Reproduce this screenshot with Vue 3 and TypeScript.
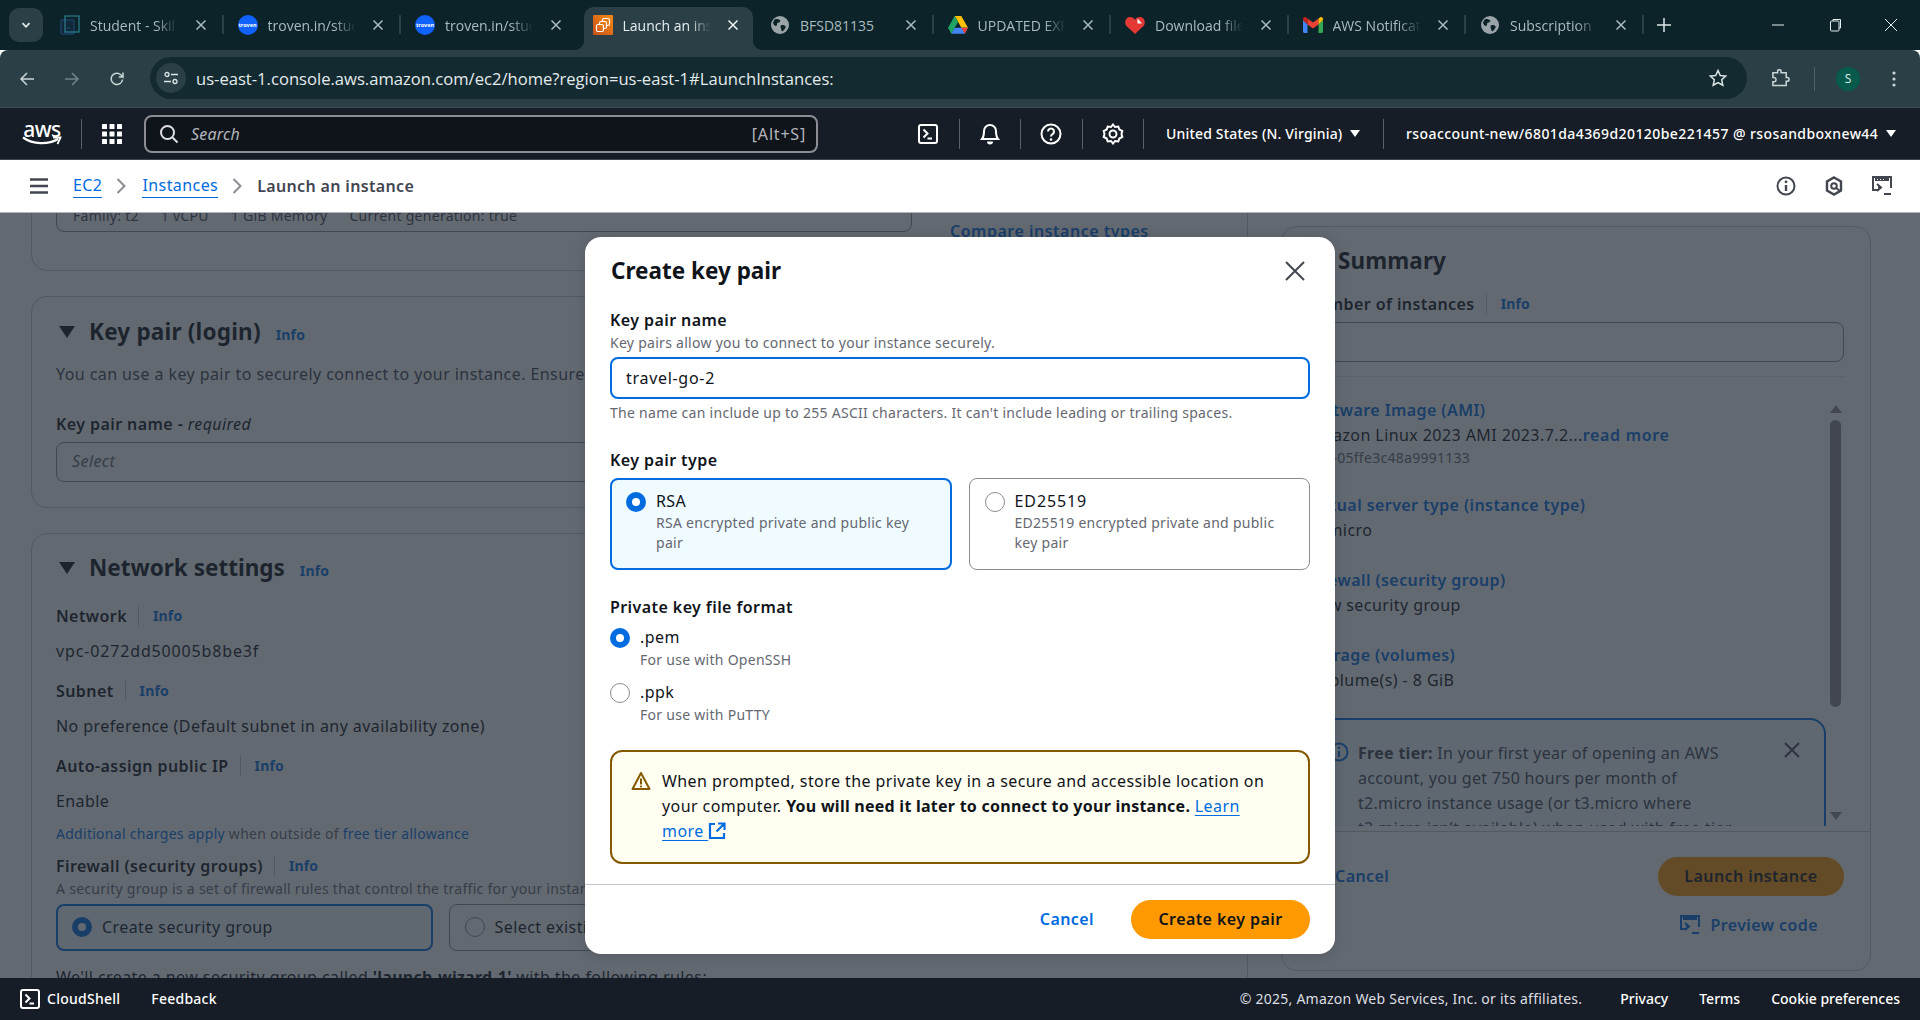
<script setup lang="ts">
interface Tab { title: string; icon: string; active?: boolean; sep?: boolean }
const tabs: Tab[] = [
  { title: 'Student - Skil', icon: 'student', sep: true },
  { title: 'troven.in/stud', icon: 'troven', sep: true },
  { title: 'troven.in/stud', icon: 'troven' },
  { title: 'Launch an ins', icon: 'launch', active: true },
  { title: 'BFSD81135', icon: 'globe', sep: true },
  { title: 'UPDATED EXF', icon: 'drive', sep: true },
  { title: 'Download file', icon: 'heart', sep: true },
  { title: 'AWS Notificat', icon: 'gmail', sep: true },
  { title: 'Subscription', icon: 'globe', sep: true },
]
const summary = [
  { link: 'Software Image (AMI)', value: 'Amazon Linux 2023 AMI 2023.7.2...', more: 'read more', sub: 'ami-05ffe3c48a9991133' },
  { link: 'Virtual server type (instance type)', value: 't2.micro' },
  { link: 'Firewall (security group)', value: 'New security group' },
  { link: 'Storage (volumes)', value: '1 volume(s) - 8 GiB' },
]
const networkRows = [
  { label: 'Network', value: 'vpc-0272dd50005b8be3f', wide: true },
  { label: 'Subnet', value: 'No preference (Default subnet in any availability zone)' },
  { label: 'Auto-assign public IP', value: 'Enable' },
]
</script>

<template>
  <div class="screen">
    <!-- browser tabs -->
    <div class="tabbar">
      <div class="tab-switch">
        <svg width="12" height="12" viewBox="0 0 12 12"><path d="M2.500 4.200 6 7.800l3.500-3.600" fill="none" stroke="#dfe8e9" stroke-width="1.800"/></svg>
      </div>
      <div v-for="(t, i) in tabs" :key="i" class="tab" :class="{ active: t.active, sep: t.sep }">
        <span class="fav">
          <svg v-if="t.icon === 'student'" width="20" height="20" viewBox="0 0 20 20"><rect x="1" y="5" width="13" height="14" rx="1" fill="#10283a" stroke="#1d3f63" stroke-width="1.400"/><rect x="5" y="1" width="14" height="16" fill="none" stroke="#2b7f8f" stroke-width="1.200"/><path d="M7 13h3" stroke="#1d4a6b" stroke-width="1.200"/></svg>
          <span v-else-if="t.icon === 'troven'" class="troven">troven</span>
          <svg v-else-if="t.icon === 'launch'" width="20" height="20" viewBox="0 0 20 20"><defs><linearGradient id="lg" x1="0" y1="1" x2="1" y2="0"><stop offset="0" stop-color="#c8511b"/><stop offset="1" stop-color="#f58a12"/></linearGradient></defs><rect width="20" height="20" rx="1" fill="url(#lg)"/><rect x="9.500" y="3.500" width="7" height="7" rx="1.500" fill="none" stroke="#fff" stroke-width="1.200"/><rect x="6.500" y="6.500" width="7" height="7" rx="1.500" fill="url(#lg)" stroke="#fff" stroke-width="1.200"/><rect x="3.500" y="9.500" width="7" height="7" rx="1.500" fill="url(#lg)" stroke="#fff" stroke-width="1.200"/></svg>
          <svg v-else-if="t.icon === 'globe'" width="18" height="18" viewBox="0 0 18 18"><circle cx="9" cy="9" r="9" fill="#9aa3a7"/><path d="M4 3.200c2.200-.6 3.600.3 5.200 1 .4 1.600-1 2-2.400 2.600C5.500 7.400 6.800 9.600 5 10 3.600 9.800 2.500 8.500 2 7c.3-1.600 1-2.800 2-3.800ZM10.200 9.200c1.800-.8 3.600 0 4.600 1.300-.4 2.200-1.700 3.800-3.600 4.900-1.200-.6-.8-2.200-1.300-3.200-.7-1-.5-2.300.3-3Z" fill="#0c2329"/></svg>
          <svg v-else-if="t.icon === 'drive'" width="20" height="18" viewBox="0 0 20 18"><path d="M6.700 0h6.600l6.700 11.800h-6.600Z" fill="#ffc107"/><path d="M6.700 0 0 11.800l3.300 5.900L10 5.900Z" fill="#1fa463"/><path d="M3.300 17.700h13.400l3.300-5.900H6.600Z" fill="#4285f4"/><path d="M16.700 17.700l3.300-5.900h-6.600Z" fill="#ea4335"/></svg>
          <svg v-else-if="t.icon === 'heart'" width="20" height="18" viewBox="0 0 20 18"><path d="M10 18 1 9.500C-1 6 1 1 5 1c2.300 0 4 1 5 3 1-2 2.700-3 5-3 4 0 6 5 4 8.500Z" fill="#e53935"/><path d="M12.500 2.500 17 7.500h-4.500Z" fill="#fff"/></svg>
          <svg v-else-if="t.icon === 'gmail'" width="20" height="16" viewBox="0 0 20 16"><path d="M0 3v11.500C0 15.300.7 16 1.500 16H4.500V7.500Z" fill="#4285f4"/><path d="M15.500 7.500V16h3c.8 0 1.500-.7 1.500-1.500V3Z" fill="#34a853"/><path d="M4.500 7.500 10 11.500l5.500-4V1.500L10 5.600 4.500 1.500Z" fill="#ea4335"/><path d="M0 3 4.500 7.500v-6L3 .4C1.700-.5 0 .4 0 2Z" fill="#c5221f"/><path d="M15.500 1.500v6L20 3V2c0-1.600-1.700-2.500-3-1.600Z" fill="#fbbc04"/></svg>
        </span>
        <span class="tab-title" :class="{ plain: t.title === 'BFSD81135' }">{{ t.title }}</span>
        <svg class="tab-x" width="12" height="12" viewBox="0 0 12 12"><path d="M1.500 1.500l9 9M10.500 1.500l-9 9" stroke="currentColor" stroke-width="1.500"/></svg>
      </div>
      <svg class="plus" width="14" height="14" viewBox="0 0 14 14"><path d="M7 0v14M0 7h14" stroke="#dfe8e9" stroke-width="1.500"/></svg>
      <div class="win">
        <svg width="14" height="14" viewBox="0 0 14 14"><path d="M1 7h12" stroke="#e6eeee" stroke-width="1"/></svg>
        <svg width="14" height="14" viewBox="0 0 14 14"><rect x="2.500" y="3" width="8.500" height="10" rx="1" fill="none" stroke="#e6eeee"/><path d="M5 3V1.500h7.500V10H11" fill="none" stroke="#e6eeee"/></svg>
        <svg width="14" height="14" viewBox="0 0 14 14"><path d="M1 1l12 12M13 1 1 13" stroke="#e6eeee" stroke-width="1"/></svg>
      </div>
    </div>

    <!-- browser toolbar -->
    <div class="toolbar">
      <div class="nav-btns">
        <svg width="16" height="16" viewBox="0 0 16 16"><path d="M15 8H2M8 2 2 8l6 6" fill="none" stroke="#c9d6d8" stroke-width="1.500"/></svg>
        <svg width="16" height="16" viewBox="0 0 16 16"><path d="M1 8h13M8 2l6 6-6 6" fill="none" stroke="#71838a" stroke-width="1.500"/></svg>
        <svg width="16" height="16" viewBox="0 0 16 16"><path d="M13.500 8.500A5.700 5.700 0 1 1 11.800 3.800L14 6V1.500M14 6H9.800" fill="none" stroke="#c9d6d8" stroke-width="1.500"/></svg>
      </div>
      <div class="urlbar">
        <span class="site-info">
          <svg width="16" height="16" viewBox="0 0 16 16"><circle cx="4" cy="4.500" r="2" fill="none" stroke="#dbe5e6" stroke-width="1.300"/><path d="M8 4.500h7M1 11.500h7" stroke="#dbe5e6" stroke-width="1.300"/><circle cx="12" cy="11.500" r="2" fill="none" stroke="#dbe5e6" stroke-width="1.300"/></svg>
        </span>
        <span class="url">us-east-1.console.aws.amazon.com/ec2/home?region=us-east-1#LaunchInstances:</span>
        <svg class="star" width="20" height="20" viewBox="0 0 20 20"><path d="M10 2.500l2.300 5 5.400.6-4 3.700 1.100 5.400L10 14.500l-4.800 2.700 1.100-5.400-4-3.700 5.400-.6Z" fill="none" stroke="#dbe5e6" stroke-width="1.500"/></svg>
      </div>
      <div class="tool-right">
        <svg width="20" height="20" viewBox="0 0 20 20"><path d="M2 5h5V3.500a1.800 1.800 0 0 1 3.600 0V5H16v5h1a2 2 0 0 1 0 4h-1v4.500H2v-4h1.500a2.300 2.300 0 0 0 0-4.500H2Z" transform="translate(1 -1) scale(.95)" fill="none" stroke="#c9d6d8" stroke-width="1.600"/></svg>
        <span class="tool-sep"></span>
        <span class="avatar">S</span>
        <svg width="4" height="16" viewBox="0 0 4 16"><circle cx="2" cy="2" r="1.600" fill="#c9d6d8"/><circle cx="2" cy="8" r="1.600" fill="#c9d6d8"/><circle cx="2" cy="14" r="1.600" fill="#c9d6d8"/></svg>
      </div>
    </div>

    <!-- AWS top navigation -->
    <header class="awsbar">
      <div class="aws-logo">
        <span>aws</span>
        <svg width="40" height="10" viewBox="0 0 40 10"><path d="M1 1.500C11 8.500 26 9 36 3" fill="none" stroke="#fff" stroke-width="2.200"/><path d="M31 1.500h7.500L35.500 8" fill="none" stroke="#fff" stroke-width="1.800"/></svg>
      </div>
      <span class="vsep first"></span>
      <svg class="grid-ico" width="20" height="20" viewBox="0 0 20 20" fill="#fff">
        <rect x="0" y="0" width="5" height="5" rx=".6"/><rect x="7.500" y="0" width="5" height="5" rx=".6"/><rect x="15" y="0" width="5" height="5" rx=".6"/>
        <rect x="0" y="7.500" width="5" height="5" rx=".6"/><rect x="7.500" y="7.500" width="5" height="5" rx=".6"/><rect x="15" y="7.500" width="5" height="5" rx=".6"/>
        <rect x="0" y="15" width="5" height="5" rx=".6"/><rect x="7.500" y="15" width="5" height="5" rx=".6"/><rect x="15" y="15" width="5" height="5" rx=".6"/>
      </svg>
      <div class="aws-search">
        <svg width="20" height="20" viewBox="0 0 20 20"><circle cx="8.500" cy="8.500" r="6.500" fill="none" stroke="#dedee3" stroke-width="2"/><path d="M13 13l5.500 5.500" stroke="#dedee3" stroke-width="2"/></svg>
        <span class="s-ph">Search</span>
        <span class="s-key">[Alt+S]</span>
      </div>
      <div class="aws-icons">
        <span class="ai cs"><svg width="20" height="20" viewBox="0 0 20 20"><rect x="1" y="1" width="18" height="18" rx="2" fill="none" stroke="#fff" stroke-width="2"/><path d="M5.500 5.500 9.500 9.500l-4 4M9.500 14.500H14" fill="none" stroke="#fff" stroke-width="2"/></svg></span>
        <span class="ai"><svg width="20" height="22" viewBox="0 0 20 22"><path d="M10 2a6 6 0 0 0-6 6c0 4-.7 6.500-2 8h16c-1.300-1.500-2-4-2-8a6 6 0 0 0-6-6Z" fill="none" stroke="#fff" stroke-width="2"/><path d="M7 18.500a3 3 0 0 0 6 0Z" fill="#fff"/></svg></span>
        <span class="ai"><svg width="22" height="22" viewBox="0 0 22 22"><circle cx="11" cy="11" r="9.500" fill="none" stroke="#fff" stroke-width="2"/><path d="M8 8.500a3 3 0 1 1 4.500 2.600c-1 .6-1.500 1.200-1.500 2.400" fill="none" stroke="#fff" stroke-width="2"/><circle cx="11" cy="16.500" r="1.300" fill="#fff"/></svg></span>
        <span class="ai"><svg width="22" height="22" viewBox="0 0 22 22"><path d="M11 1.500l2 2.500 3.300-.5 1 3 3 1.500-.8 3 .8 3-3 1.500-1 3-3.300-.5-2 2.500-2-2.500-3.300.5-1-3-3-1.500.8-3-.8-3 3-1.500 1-3 3.300.5Z" fill="none" stroke="#fff" stroke-width="2"/><circle cx="11" cy="11" r="3.500" fill="none" stroke="#fff" stroke-width="2"/></svg></span>
        <span class="ai region">United States (N. Virginia)<i class="caret"></i></span>
        <span class="ai account">rsoaccount-new/6801da4369d20120be221457 @ rsosandboxnew44<i class="caret"></i></span>
      </div>
    </header>

    <!-- breadcrumbs -->
    <div class="crumbs">
      <svg class="burger" width="18" height="16" viewBox="0 0 18 16"><path d="M0 1.500h18M0 8h18M0 14.500h18" stroke="#424650" stroke-width="2.400"/></svg>
      <a class="cr-link">EC2</a>
      <svg class="chev" width="10" height="16" viewBox="0 0 10 16"><path d="M1.500 1 8.500 8l-7 7" fill="none" stroke="#8c8c94" stroke-width="2"/></svg>
      <a class="cr-link">Instances</a>
      <svg class="chev" width="10" height="16" viewBox="0 0 10 16"><path d="M1.500 1 8.500 8l-7 7" fill="none" stroke="#8c8c94" stroke-width="2"/></svg>
      <span class="cr-cur">Launch an instance</span>
      <div class="cr-icons">
        <svg width="20" height="20" viewBox="0 0 20 20"><circle cx="10" cy="10" r="8.500" fill="none" stroke="#424650" stroke-width="2"/><path d="M10 9v6" stroke="#424650" stroke-width="2.400"/><circle cx="10" cy="5.800" r="1.400" fill="#424650"/></svg>
        <svg width="20" height="20" viewBox="0 0 20 20"><path d="M10 1.500l7 4v9l-7 4-7-4v-9Z" fill="none" stroke="#424650" stroke-width="2.400"/><circle cx="10" cy="10" r="2.800" fill="none" stroke="#424650" stroke-width="2"/><path d="M12 12l4 3" stroke="#424650" stroke-width="2"/></svg>
        <svg width="20" height="20" viewBox="0 0 20 20"><path d="M6 14H1V1h18v11" fill="none" stroke="#424650" stroke-width="2"/><path d="M3 5h14V2H3Z" fill="#424650"/><path d="M5 3.500h1M8 3.500h1M11 3.500h1" stroke="#fff"/><path d="M5 8l4 3.500L5 15M9 11.500H6" fill="none" stroke="#424650" stroke-width="2"/><path d="M12 18h7" stroke="#424650" stroke-width="2"/></svg>
      </div>
    </div>

    <!-- page content behind the dialog -->
    <main class="content">
      <div class="columns">
        <div class="left">
          <section class="card card-type">
            <div class="type-box">
              <span>Family: t2</span><span>1 vCPU</span><span>1 GiB Memory</span><span>Current generation: true</span>
            </div>
            <a class="compare">Compare instance types</a>
          </section>

          <section class="card card-key">
            <h2 class="sec-head"><i class="tri"></i>Key pair (login)<a class="info big">Info</a></h2>
            <p class="body key-text">You can use a key pair to securely connect to your instance. Ensure that you have access to the selected key pair before you launch the instance.</p>
            <div class="lbl key-lbl">Key pair name - <em>required</em></div>
            <div class="select">Select</div>
          </section>

          <section class="card card-net">
            <h2 class="sec-head"><i class="tri"></i>Network settings<a class="info big">Info</a></h2>
            <template v-for="r in networkRows" :key="r.label">
              <div class="lbl-row"><span class="lbl">{{ r.label }}</span><span class="lsep"></span><a class="info">Info</a></div>
              <div class="body val" :class="{ wide: r.wide }">{{ r.value }}</div>
            </template>
            <div class="small charges"><a>Additional charges apply</a> when outside of <a>free tier allowance</a></div>
            <div class="lbl-row fw"><span class="lbl">Firewall (security groups)</span><span class="lsep"></span><a class="info">Info</a></div>
            <div class="small fw-desc">A security group is a set of firewall rules that control the traffic for your instance.</div>
            <div class="fw-tiles">
              <div class="fw-tile on"><i class="radio on"></i>Create security group</div>
              <div class="fw-tile"><i class="radio"></i>Select existing security group</div>
            </div>
            <p class="body wizard">We'll create a new security group called <b>'launch-wizard-1'</b> with the following rules:</p>
          </section>
        </div>

        <aside class="panel">
          <div class="panel-top">
            <h2 class="sum-title">Summary</h2>
            <div class="lbl-row"><span class="lbl">Number of instances</span><span class="lsep"></span><a class="info">Info</a></div>
            <div class="num-input"></div>
          </div>
          <div class="panel-scroll">
            <div v-for="s in summary" :key="s.link" class="sum-item">
              <a class="sum-link">{{ s.link }}</a>
              <div class="body">{{ s.value }}<a v-if="s.more" class="sum-more">{{ s.more }}</a></div>
              <div v-if="s.sub" class="small sub">{{ s.sub }}</div>
            </div>
            <div class="free">
              <svg class="free-i" width="20" height="20" viewBox="0 0 20 20"><circle cx="10" cy="10" r="8.500" fill="none" stroke="#006ce0" stroke-width="2"/><path d="M10 9v6" stroke="#006ce0" stroke-width="2.200"/><circle cx="10" cy="5.800" r="1.300" fill="#006ce0"/></svg>
              <p class="free-text"><b>Free tier:</b> In your first year of opening an AWS account, you get 750 hours per month of t2.micro instance usage (or t3.micro where t2.micro isn't available) when used with free tier AMIs.</p>
              <svg class="free-x" width="16" height="16" viewBox="0 0 16 16"><path d="M1 1l14 14M15 1 1 15" stroke="#424650" stroke-width="2"/></svg>
            </div>
            <div class="sb-up"></div>
            <div class="sb-thumb"></div>
            <div class="sb-down"></div>
          </div>
          <div class="panel-foot">
            <div class="foot-row"><a class="pf-cancel">Cancel</a><span class="launch">Launch instance</span></div>
            <a class="preview">
              <svg width="20" height="20" viewBox="0 0 20 20"><path d="M6 14H1V1h18v11" fill="none" stroke="#006ce0" stroke-width="2"/><path d="M3 5h14V2H3Z" fill="#006ce0"/><path d="M5 8l4 3.500L5 15M9 11.500H6" fill="none" stroke="#006ce0" stroke-width="2"/><path d="M12 18h7" stroke="#006ce0" stroke-width="2"/></svg>
              Preview code
            </a>
          </div>
        </aside>
      </div>

      <!-- dialog -->
      <div class="overlay">
        <div class="modal">
          <div class="m-head">
            <h1>Create key pair</h1>
            <svg width="22" height="22" viewBox="0 0 22 22"><path d="M2 2l18 18M20 2 2 20" stroke="#424650" stroke-width="2"/></svg>
          </div>
          <div class="m-body">
            <div class="lbl m-name">Key pair name</div>
            <div class="small m-desc">Key pairs allow you to connect to your instance securely.</div>
            <div class="m-input">travel-go-2</div>
            <div class="small m-hint">The name can include up to 255 ASCII characters. It can't include leading or trailing spaces.</div>

            <div class="lbl m-type">Key pair type</div>
            <div class="m-tiles">
              <div class="m-tile on">
                <i class="radio on"></i>
                <div><div class="body">RSA</div><div class="small grey">RSA encrypted private and public key pair</div></div>
              </div>
              <div class="m-tile">
                <i class="radio"></i>
                <div><div class="body">ED25519</div><div class="small grey">ED25519 encrypted private and public key pair</div></div>
              </div>
            </div>

            <div class="lbl m-format">Private key file format</div>
            <div class="m-radio first">
              <i class="radio on"></i>
              <div><div class="body">.pem</div><div class="small grey">For use with OpenSSH</div></div>
            </div>
            <div class="m-radio">
              <i class="radio"></i>
              <div><div class="body">.ppk</div><div class="small grey">For use with PuTTY</div></div>
            </div>

            <div class="alert">
              <svg class="alert-i" width="20" height="20" viewBox="0 0 20 20"><path d="M10 2 1.500 18h17Z" fill="none" stroke="#855900" stroke-width="2" stroke-linejoin="round"/><path d="M10 7.500v6" stroke="#855900" stroke-width="2"/><circle cx="10" cy="15.500" r="1.100" fill="#855900"/></svg>
              <p>When prompted, store the private key in a secure and accessible location on your computer. <b>You will need it later to connect to your instance.</b> <a class="ext">Learn more <svg width="18" height="18" viewBox="0 0 18 18"><path d="M7 2H2v14h14v-5" fill="none" stroke="#006ce0" stroke-width="2.200"/><path d="M10 1.500h6.500V8M16 2 8.500 9.500" fill="none" stroke="#006ce0" stroke-width="2.200"/></svg></a></p>
            </div>
          </div>
          <div class="m-foot">
            <a class="m-cancel">Cancel</a>
            <span class="m-create">Create key pair</span>
          </div>
        </div>
      </div>
    </main>

    <!-- console footer -->
    <footer class="foot">
      <svg width="20" height="20" viewBox="0 0 20 20"><rect x="1" y="1" width="18" height="18" rx="2" fill="none" stroke="#fff" stroke-width="2"/><path d="M5.500 5.500 9.500 9.500l-4 4M9.500 14.500H14" fill="none" stroke="#fff" stroke-width="2"/></svg>
      <span class="f-cs">CloudShell</span>
      <span class="f-fb">Feedback</span>
      <span class="f-copy">© 2025, Amazon Web Services, Inc. or its affiliates.</span>
      <span class="f-link first">Privacy</span>
      <span class="f-link">Terms</span>
      <span class="f-link">Cookie preferences</span>
    </footer>
  </div>
</template>

<style>
html, body { margin: 0; background: #fff; overflow: hidden; }
</style>

<style scoped>
.screen { width: 1920px; height: 1020px; display: flex; flex-direction: column; overflow: hidden; font-family: "Noto Sans", sans-serif; color: #0f141a; font-size: 16px; line-height: 24px; letter-spacing: .42px; }
a { color: #006ce0; text-decoration: none; }
h1, h2, p { margin: 0; }
i { font-style: normal; }

/* tabs */
.tabbar { height: 50px; flex: none; background: #0c2329; display: flex; align-items: flex-end; font-family: "Open Sans", sans-serif; letter-spacing: 0; padding-left: 9px; box-sizing: border-box; }
.tab-switch { align-self: flex-start; margin: 8px 8px 0 0; width: 34px; height: 34px; flex: none; border-radius: 10px; background: #2a4046; display: flex; align-items: center; justify-content: center; }
.tab { width: 177.500px; height: 43px; flex: none; display: flex; align-items: flex-start; box-sizing: border-box; padding: 8px 0 0 9px; color: #a9bcbf; position: relative; }
.tab.active { width: 169px; margin-right: 8.500px; background: #2a4046; border-radius: 10px 10px 0 0; color: #e8eeef; }
.tab.active::before, .tab.active::after { content: ""; position: absolute; bottom: 0; width: 10px; height: 10px; }
.tab.active::before { left: -10px; background: radial-gradient(circle at 0 0, transparent 10px, #2a4046 10.500px); }
.tab.active::after { right: -10px; background: radial-gradient(circle at 100% 0, transparent 10px, #2a4046 10.500px); }
.tab.sep::after { content: ""; position: absolute; right: 5px; top: 8px; width: 2px; height: 19px; background: #2a4046; }
.fav { width: 20px; height: 20px; display: flex; align-items: center; justify-content: center; flex: none; }
.tab-title { margin: 1px 0 0 10px; width: 88px; font-size: 14px; line-height: 20px; white-space: nowrap; overflow: hidden; -webkit-mask-image: linear-gradient(to right, #000 75%, transparent); mask-image: linear-gradient(to right, #000 75%, transparent); }
.tab-title.plain { -webkit-mask-image: none; mask-image: none; }
.tab-x { position: absolute; right: 22px; top: 12px; }
.tab.active .tab-x { color: #f2f6f6; right: 14px; }
.troven { width: 20px; height: 20px; border-radius: 50%; background: #0f62fe; color: #fff; font: 700 5.500px/20px "Noto Sans", sans-serif; text-align: center; display: block; overflow: hidden; }
.plus { align-self: flex-start; margin: 18px 0 0 8px; flex: none; }
.win { align-self: flex-start; margin: 18px 22px 0 auto; width: 127px; flex: none; display: flex; justify-content: space-between; }

/* toolbar */
.toolbar { height: 58px; flex: none; box-sizing: border-box; background: #2a4046; border-radius: 8px 8px 0 0; border-bottom: 1px solid #3f4d50; display: flex; align-items: center; padding-left: 19px; letter-spacing: 0; }
.nav-btns { display: flex; gap: 29px; width: 131px; flex: none; }
.urlbar { width: 1597px; height: 42px; flex: none; border-radius: 21px; background: #132a30; display: flex; align-items: center; margin-top: -1px; padding-left: 6px; box-sizing: border-box; }
.site-info { width: 30px; height: 30px; border-radius: 50%; background: #2a4046; display: flex; align-items: center; justify-content: center; flex: none; }
.url { margin: 2px 0 0 10px; font: 16.600px/20px "Open Sans", sans-serif; color: #e3ebec; flex: 1; white-space: nowrap; }
.star { margin-right: 19px; }
.tool-right { display: flex; align-items: center; margin-left: 23px; }
.tool-sep { width: 1px; height: 24px; background: #4d6064; margin-left: 24px; }
.avatar { width: 24px; height: 24px; border-radius: 50%; background: #075a4c; color: #dfeeea; font: 12px/24px "Open Sans", sans-serif; text-align: center; margin: 0 32px 0 21px; }

/* aws bar */
.awsbar { height: 52px; flex: none; box-sizing: border-box; background: #161d26; border-bottom: 1px solid #3f4650; display: flex; align-items: center; color: #fff; font-size: 14px; line-height: 20px; letter-spacing: 0; }
.aws-logo { width: 40px; margin-left: 22px; display: flex; flex-direction: column; align-items: center; height: 26px; flex: none; }
.aws-logo span { font: 500 21px/16px "Noto Sans", sans-serif; letter-spacing: -.5px; height: 15px; }
.vsep.first { width: 1px; height: 30px; background: #5a6069; margin-left: 19px; flex: none; }
.grid-ico { margin-left: 20px; flex: none; }
.aws-search { margin-left: 22px; width: 674px; flex: none; height: 38px; box-sizing: border-box; border: 2px solid #8c8c94; border-radius: 8px; background: #0f141a; display: flex; align-items: center; padding-left: 13px; padding-right: 10px; }
.s-ph { margin-left: 12px; font-style: italic; font-size: 16px; color: #b4b4bb; flex: 1; letter-spacing: .2px; }
.s-key { font-size: 16px; color: #b4b4bb; letter-spacing: .8px; }
.aws-icons { display: flex; align-items: center; height: 30px; margin-left: 79px; flex: none; }
.ai { display: flex; align-items: center; justify-content: center; height: 30px; box-sizing: border-box; white-space: nowrap; width: 61.500px; flex: none; border-left: 1px solid #5a6069; }
.ai.cs { border-left: 0; }
.ai.region { width: 240px; font-weight: 500; justify-content: flex-start; padding-left: 22px; letter-spacing: .17px; }
.ai.account { width: 530px; font-weight: 500; justify-content: flex-start; padding-left: 22px; letter-spacing: .42px; }
.caret { display: inline-block; margin-left: 8px; border-left: 5px solid transparent; border-right: 5px solid transparent; border-top: 7px solid #fff; }

/* crumbs */
.crumbs { height: 53px; flex: none; box-sizing: border-box; background: #fff; border-bottom: 1px solid #b4b4bb; display: flex; align-items: center; padding-left: 30px; }
.burger { margin-right: 25px; }
.cr-link { color: #006ce0; border-bottom: 1px solid #006ce0; line-height: 23px; }
.chev { margin: 0 16px 0 14px; }
.cr-cur { font-weight: 600; color: #424650; letter-spacing: .35px; margin-left: -1px; }
.cr-icons { margin-left: auto; display: flex; gap: 28px; padding-right: 28px; }

/* page */
.content { flex: 1; min-height: 0; position: relative; overflow: hidden; background: #fff; }
.columns { display: grid; grid-template-columns: 1217px 590px; column-gap: 33px; padding-left: 31px; align-items: start; }
.left { margin-top: -60px; display: flex; flex-direction: column; gap: 25px; }
.card { border: 1px solid #c6c6cd; border-radius: 16px; box-sizing: border-box; padding: 0 24px; }
.card-type { height: 118px; display: flex; align-items: flex-end; padding-bottom: 38px; }
.type-box { width: 856px; flex: none; box-sizing: border-box; border: 1px solid #8c8c94; border-radius: 8px; height: 60px; padding: 0 16px 5px; font-size: 14px; line-height: 20px; display: flex; align-items: flex-end; gap: 22px; color: #424650; letter-spacing: .28px; }
.compare { margin-left: 38px; font-weight: 600; font-size: 16px; line-height: 20px; margin-bottom: -9px; white-space: nowrap; letter-spacing: .5px; }
.card-key { height: 212px; padding-top: 20px; }
.sec-head { font-size: 22.500px; line-height: 30px; font-weight: 700; display: flex; align-items: center; letter-spacing: 0; }
.card-key .sec-head { letter-spacing: .2px; }
.tri { width: 0; height: 0; border-left: 8.500px solid transparent; border-right: 8.500px solid transparent; border-top: 12px solid currentColor; margin: 0 14px 0 3px; }
.info { font-size: 14px; line-height: 20px; font-weight: 700; letter-spacing: .15px; }
.info.big { margin-left: 15px; margin-top: 6px; }
.key-text { margin-top: 15px; color: #424650; white-space: nowrap; }
.lbl { font-weight: 600; }
.key-lbl { margin-top: 26px; }
.key-lbl em { font-weight: 400; font-style: italic; }
.select { margin-top: 6px; height: 40px; box-sizing: border-box; border: 1px solid #8c8c94; border-radius: 8px; padding: 0 15px; line-height: 37px; font-style: italic; color: #656871; }
.card-net { height: 520px; padding-top: 19px; }
.lbl-row { display: flex; align-items: center; height: 24px; }
.lsep { width: 1px; height: 20px; background: #c6c6cd; margin: 0 14px 0 11px; }
.card-net .lbl-row { margin-top: 16px; }
.card-net .sec-head + .lbl-row { margin-top: 21px; }
.val { margin-top: 11px; }
.val.wide { letter-spacing: .85px; }
.small { font-size: 14px; line-height: 20px; letter-spacing: .28px; }
.charges { margin-top: 11px; color: #656871; }
.card-net .lbl-row.fw { margin-top: 10px; }
.fw-desc { margin-top: 1px; color: #656871; white-space: nowrap; }
.fw-tiles { margin-top: 5px; display: flex; gap: 16px; }
.fw-tile { width: 376.500px; flex: none; height: 47px; box-sizing: border-box; border: 1px solid #8c8c94; border-radius: 8px; display: flex; align-items: center; padding: 0 0 1px 15px; gap: 10px; white-space: nowrap; }
.fw-tile.on { border: 2px solid #006ce0; background: #f0fbff; padding-left: 14px; }
.wizard { margin-top: 14px; white-space: nowrap; }
.wizard b { letter-spacing: .25px; }

.radio { width: 20px; height: 20px; flex: none; box-sizing: border-box; border-radius: 50%; border: 1.500px solid #8c8c94; background: #fff; display: block; }
.radio.on { border: 6.500px solid #006ce0; }

.panel { margin-top: 13px; height: 745px; box-sizing: border-box; border: 1px solid #c6c6cd; border-radius: 16px; display: flex; flex-direction: column; }
.panel-top { padding: 19px 26px 15px 25px; border-bottom: 1px solid transparent; position: relative; }
.panel-top::after { content: ""; position: absolute; left: 25px; right: 26px; bottom: 0; height: 1px; background: #c6c6cd; opacity: .5; }
.sum-title { font-size: 22.500px; line-height: 30px; font-weight: 700; padding-left: 31px; letter-spacing: .1px; }
.panel-top .lbl-row { margin: 16px 0 0 -3px; }
.num-input { margin-top: 6px; height: 40px; box-sizing: border-box; border: 1px solid #8c8c94; border-radius: 8px; }
.panel-scroll { height: 448px; box-sizing: border-box; overflow: hidden; padding: 20px 46px 0 25px; position: relative; margin-bottom: 5px; flex: none; }
.sum-item { margin-bottom: 25px; }
.sum-item:nth-child(2), .sum-item:nth-child(3) { margin-bottom: 26px; }
.sum-link { font-weight: 600; display: block; margin-bottom: 1px; }
.sum-more { font-weight: 600; letter-spacing: .7px; }
.sub { margin-top: 1px; color: #656871; }
.free { border: 2px solid #006ce0; border-radius: 16px; background: #f0fbff; height: 300px; box-sizing: border-box; position: relative; padding: 21px 92px 0 49px; width: 519px; margin-top: 26px; }
.free-i { position: absolute; left: 20px; top: 22px; }
.free-x { position: absolute; right: 24px; top: 22px; }
.free-text { line-height: 25px; color: #424650; letter-spacing: .3px; }
.sb-up, .sb-down { position: absolute; right: 28px; width: 0; height: 0; border-left: 6px solid transparent; border-right: 6px solid transparent; }
.sb-up { top: 27px; border-bottom: 8px solid #8f8989; }
.sb-down { top: 434px; border-top: 8px solid #8f8989; }
.sb-thumb { position: absolute; right: 29px; top: 42px; width: 11px; height: 287px; border-radius: 6px; background: #8f8989; }
.panel-foot { border-top: 1px solid #c6c6cd; padding: 25px 26px 0 25px; display: flex; flex-direction: column; align-items: flex-end; }
.foot-row { width: 100%; display: flex; justify-content: space-between; align-items: center; }
.pf-cancel { font-weight: 600; margin-left: 28px; margin-top: -2px; }
.launch { width: 186px; height: 39px; border-radius: 20px; background: #ff9900; font-weight: 600; text-align: center; line-height: 38px; }
.preview { margin-top: 17px; margin-right: 26px; display: flex; align-items: center; gap: 10px; font-weight: 600; }

/* overlay + modal */
.overlay { position: absolute; inset: 0; background: rgba(35, 43, 55, .71); display: flex; justify-content: center; padding-top: 24px; box-sizing: border-box; }
.modal { width: 750px; height: 717px; background: #fff; border-radius: 16px; box-shadow: 0 1px 14px rgba(0, 7, 22, .14); display: flex; flex-direction: column; }
.m-head { display: flex; justify-content: space-between; align-items: center; padding: 19px 29px 0 26px; }
.m-head h1 { font-size: 22.500px; line-height: 30px; font-weight: 700; letter-spacing: 0; }
.m-body { padding: 22px 25px 0; flex: 1; }
.m-desc { margin-top: 1px; color: #656871; }
.m-input { margin-top: 4px; height: 42px; box-sizing: border-box; border: 2px solid #006ce0; border-radius: 8px; padding-left: 14px; line-height: 38px; letter-spacing: .7px; }
.m-hint { margin-top: 4px; color: #656871; }
.m-type { margin-top: 25px; }
.m-tiles { margin-top: 6px; display: grid; grid-template-columns: 342px 341.500px; column-gap: 16.500px; }
.m-tile { height: 92px; box-sizing: border-box; border: 1px solid #8c8c94; border-radius: 8px; display: flex; gap: 10px; padding: 10px 15px; }
.m-tile:not(.on) .body { letter-spacing: .9px; }
.m-tile.on { border: 2px solid #006ce0; background: #f0fbff; padding: 9px 14px; }
.m-tile .radio { margin-top: 3px; }
.grey { color: #656871; }
.m-format { margin-top: 25px; }
.m-radio { display: flex; gap: 10px; margin-top: 10px; }
.m-radio.first { margin-top: 6px; }
.m-radio .radio { margin-top: 3px; }
.m-radio .small { margin-top: 1px; }
.alert { margin-top: 25px; height: 114px; box-sizing: border-box; border: 2px solid #855900; border-radius: 12px; background: #fffef0; display: flex; padding: 17px 0 0 19px; gap: 11px; }
.alert-i { flex: none; margin-top: 2px; }
.alert p { width: 608px; line-height: 25px; }
.alert b { letter-spacing: .25px; }
.ext { text-decoration: underline; text-underline-offset: 3px; }
.ext svg { vertical-align: -3px; }
.m-foot { height: 70px; box-sizing: border-box; border-top: 1px solid #c6c6cd; display: flex; align-items: flex-start; justify-content: flex-end; padding: 15px 25px 0; }
.m-cancel { font-weight: 600; line-height: 39px; margin-right: 37px; }
.m-create { width: 179px; height: 39px; border-radius: 20px; background: #ff9900; font-weight: 600; text-align: center; line-height: 38px; }

/* footer */
.foot { height: 42px; flex: none; background: #161d26; color: #fff; display: flex; align-items: center; padding-left: 20px; font-size: 14px; line-height: 20px; letter-spacing: .25px; }
.f-cs { margin-left: 7px; font-weight: 500; }
.f-fb { margin-left: 31px; font-weight: 500; }
.f-copy { margin-left: auto; color: #dedee3; }
.f-link { margin-left: 31px; font-weight: 500; letter-spacing: 0; }
.f-link.first { margin-left: 38px; }
.f-link:last-child { margin-right: 20px; }
</style>
